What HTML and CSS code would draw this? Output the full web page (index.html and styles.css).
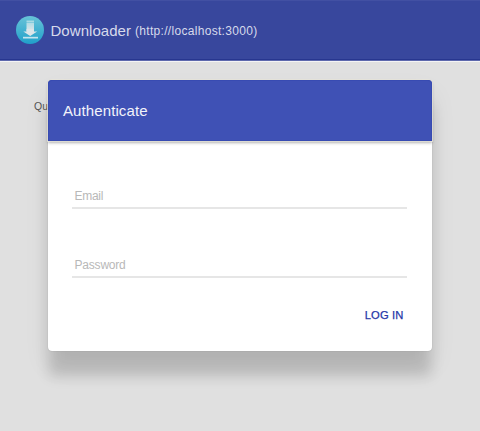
FILE: index.html
```html
<!DOCTYPE html>
<html lang="en">
<head>
<meta charset="utf-8">
<title>Downloader</title>
<link rel="stylesheet" href="styles.css">
</head>
<body>
<header class="appbar">
  <svg class="logo" viewBox="0 0 28 28" aria-hidden="true">
    <defs>
      <linearGradient id="disc" x1="0" y1="0" x2="0" y2="1"><stop offset="0" stop-color="#68c3d8"/><stop offset="1" stop-color="#20a0ca"/></linearGradient>
      <linearGradient id="shaft" x1="0" y1="0" x2="0" y2="1"><stop offset="0" stop-color="#a5d9e3"/><stop offset="1" stop-color="#dce5e9"/></linearGradient>
    </defs>
    <circle cx="14" cy="14" r="14" fill="url(#disc)"/>
    <path d="M10.500 4.500h7.500v1.500h-7.500zM10.500 6.500h7.500V15h-7.500z" fill="url(#shaft)"/>
    <path d="M10.500 13v2.500H7.300L14.200 20 21.200 15.500h-3.200V13z" fill="#dce5e9"/>
    <path d="M7 20.800h15v1.700h-15z" fill="#c5e4ee"/>
  </svg>
  <h1 class="title">Downloader</h1>
  <span class="host">(http://localhost:3000)</span>
</header>
<main class="page">
  <span class="tab">Queue</span>
  <form class="dialog">
    <h2 class="dialog-title">Authenticate</h2>
    <div class="fields">
      <div class="field email">Email</div>
      <div class="field password">Password</div>
    </div>
    <div class="actions"><span class="login">LOG IN</span></div>
  </form>
</main>
</body>
</html>
```
FILE: styles.css
```css
* { box-sizing: border-box; }
body {
  margin: 0;
  height: 431px;
  overflow: hidden;
  background: #e0e0e0;
  font-family: "Liberation Sans", Arial, sans-serif;
}
.appbar {
  display: flex;
  align-items: center;
  height: 62px;
  padding: 0 16px 2px;
  background: #38479d;
  border-top: 1px solid #4250a3;
  border-bottom: 1px solid #f4f4f5;
  box-shadow: inset 0 -1px #5d68ad, inset 0 -2px #27368f;
  color: #d7daeb;
}
.logo { width: 28px; height: 28px; margin-right: 6.5px; }
.title { margin: 0; padding-top: 2px; font-size: 15px; font-weight: 400; line-height: 20px; letter-spacing: .04px; }
.host { padding-top: 2px; margin-left: 4px; font-size: 12px; line-height: 20px; letter-spacing: .31px; }
.page { position: relative; padding: 18px 48px; }
.tab {
  position: absolute;
  left: 34px;
  top: 38px;
  font-size: 10.5px;
  line-height: 12px;
  color: #555;
}
.dialog {
  position: relative;
  height: 271px;
  border-radius: 4px;
  background: #fff;
  box-shadow: 0 0 1px rgba(0, 0, 0, .3), 0 26px 14px -1px rgba(0, 0, 0, .15), 0 14px 26px rgba(0, 0, 0, .08);
}
.dialog-title {
  margin: 0;
  height: 61px;
  padding-left: 15px;
  border-radius: 4px 4px 0 0;
  background: #3f51b5;
  box-shadow: inset 0 0 0 1px #384bb2, 0 0 0 1px rgba(235, 232, 220, .7), 0 2px 3px rgba(0, 0, 0, .3);
  color: #f2f3fa;
  font-size: 15px;
  font-weight: 400;
  line-height: 62px;
  letter-spacing: .1px;
}
.fields { padding: 43px 25px 0 24px; }
.field {
  height: 25px;
  padding-left: 2.5px;
  border-bottom: 2px solid #e6e6e6;
  color: #b8b8b8;
  font-size: 12px;
  line-height: 25px;
  letter-spacing: -.2px;
}
.email { margin-bottom: 44px; letter-spacing: -.3px; }
.password { margin-bottom: 45px; }
.actions { display: flex; justify-content: flex-end; margin-top: -18px; padding-right: 28.500px; }
.login { color: #2637a8; font-size: 11.200px; line-height: 21px; letter-spacing: .15px; -webkit-text-stroke: .25px #2637a8; }
```
